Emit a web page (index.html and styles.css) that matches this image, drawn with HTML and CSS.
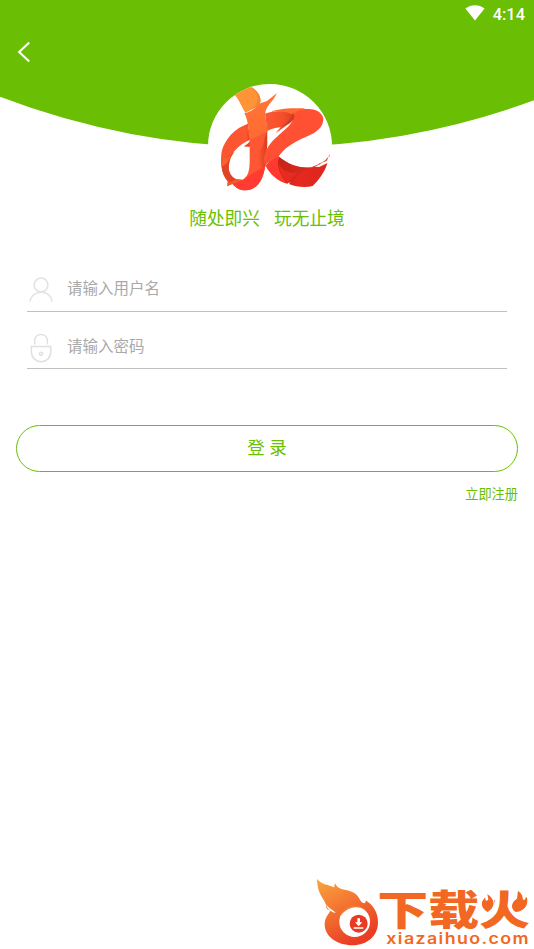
FILE: index.html
```html
<!DOCTYPE html>
<html lang="zh-CN">
<head>
    <meta charset="UTF-8">
    <meta name="viewport" content="width=device-width, initial-scale=1.0">
    <title>登录</title>
    <link rel="stylesheet" href="styles.css">
</head>
<body>
    <div class="login-page">
        <!-- Header -->
        <header class="header">
            <svg class="header-bg" viewBox="0 0 534 148" aria-hidden="true">
                <path fill="#6abe04" d="M0 0H534V100.3A760 760 0 0 1 0 96.8Z"/>
            </svg>
            <div class="status-bar">
                <svg class="wifi" viewBox="0 0 20 16" aria-hidden="true">
                    <path fill="#fff" d="M.4 3.6C6-.9 14-.9 19.6 3.6L10 15.4Z"/>
                </svg>
                <span>4:14</span>
            </div>
            <a class="back-btn" href="#" aria-label="返回">
                <svg viewBox="0 0 14 22" aria-hidden="true">
                    <path fill="none" stroke="#fff" stroke-width="2.1" d="M12.2 1.5 2.2 11l10 9.5"/>
                </svg>
            </a>
        </header>

        <!-- Logo -->
        <div class="logo">
            <svg viewBox="24 24 372 372" aria-hidden="true">
                <defs>
                    <linearGradient id="stem" x1="0" y1="0" x2="0" y2="1">
                        <stop offset="0" stop-color="#ff7636"/>
                        <stop offset="1" stop-color="#ff6a32"/>
                    </linearGradient>
                    <linearGradient id="fold" x1="0" y1="0" x2="1" y2="0">
                        <stop offset="0" stop-color="#ff5733"/>
                        <stop offset=".6" stop-color="#f44e2b"/>
                        <stop offset="1" stop-color="#d93c22"/>
                    </linearGradient>
                    <linearGradient id="tail" x1="0" y1="0" x2="1" y2="0">
                        <stop offset="0" stop-color="#c42117"/>
                        <stop offset=".4" stop-color="#e5291f"/>
                        <stop offset="1" stop-color="#dc261e"/>
                    </linearGradient>
                    <linearGradient id="shade" x1="0" y1="0" x2="1" y2="0">
                        <stop offset="0" stop-color="#c83018" stop-opacity="0"/>
                        <stop offset="1" stop-color="#c83018" stop-opacity=".7"/>
                    </linearGradient>
                </defs>
                <!-- left loop -->
                <path fill="#fc5531" d="M144 143C105 156 76 188 66 223C59 254 65 294 83 317L82 329L97 322C108 329 128 315 128 311C102 315 87 299 86 277C85 238 110 208 151 191Z"/>
                <path fill="#e04427" d="M66 248C61 278 69 304 88 317L82 329L101 321L108 309C91 302 84 282 87 267C90 246 99 229 108 220C97 234 82 245 66 248Z"/>
                <path fill="#fa6030" d="M67 246C83 246 95 239 104 228L79 263C69 270 66 271 65 273Z"/>
                <path fill="#e04a2a" d="M144 143C134 151 139 166 146 177L151 190L144 192L139 157Z"/>
                <path fill="#f45c2d" d="M83 318L82 331L103 322 128 311 108 309C98 318 91 319 83 318Z"/>
                <!-- orange top -->
                <path fill="#ff9338" d="M103 56Q123 37 154 33C171 43 184 65 180 79C176 92 156 100 136 110C126 95 119 72 103 56Z"/>
                <path fill="#f4842f" d="M154 33C180 48 188 73 177 87L137 111C157 99 172 86 173 69C174 54 165 42 154 33Z"/>
                <!-- upper arch -->
                <path fill="url(#fold)" d="M195 113C227 101 275 103 284 115C290 133 254 151 227 173L242 154C224 155 209 161 202 166Z"/>
                <path fill="#ff6a32" d="M216 105C249 95 291 96 315 97L292 108 281 117C264 107 242 105 216 107Z"/>
                <!-- stem -->
                <path fill="#ff5733" d="M151 190L202 163L202 203C202 231 193 241 196 266C191 305 173 342 137 343C119 343 107 335 97 323C139 314 150 298 149 248L149 211L132 211C142 207 147 202 151 190Z"/>
                <path fill="url(#stem)" d="M133 112C156 107 160 99 181 82L201 75L231 51C218 79 196 91 196 113C196 134 202 142 203 166L149 193C146 155 143 130 133 112Z"/>
                <path fill="url(#shade)" d="M200 164C201 189 201 207 201 216L194 241C193 260 197 266 198 270L187 276C171 257 170 228 188 211Z"/>
                <path fill="#ff3b32" d="M97 323C113 319 128 313 137 305L196 269C190 312 172 342 137 343C119 343 108 336 97 323Z"/>
                <path fill="#ee4527" d="M132 211L149 199V213Z"/>
                <!-- right stroke -->
                <path fill="#ff5033" d="M281 115C294 101 306 98 323 99C350 98 370 113 370 130C369 162 335 177 305 188C272 205 252 218 237 240C226 257 200 255 197 270C189 254 192 235 201 219C224 175 285 153 281 115Z"/>
                <path fill="#c93820" d="M278 108C289 120 283 132 269 142L241 155L227 170C236 154 280 133 278 108Z" opacity=".65"/>
                <path fill="#ff3830" d="M197 269C205 256 220 251 237 239C233 261 241 283 264 324C235 318 207 292 197 269Z"/>
                <path fill="url(#tail)" d="M237 242C270 269 306 278 341 273Q365 268 382 262C374 290 355 314 338 330C314 337 286 332 267 324L271 319L261 322C242 302 228 268 237 242Z"/>
                <path fill="#c42818" d="M237 242C267 268 304 278 335 274C306 281 290 305 262 322C242 302 229 274 237 242Z" opacity=".5"/>
                <path fill="#e62b20" d="M237 262C245 283 263 292 292 290L263 321C246 308 235 282 237 262Z"/>
                <path fill="#ee4430" d="M336 272C353 268 359 261 380 256L390 232L388 242L381 246C377 255 365 259 355 263L383 261Q360 279 336 272Z"/>
                <path fill="#fff" d="M345 272L384 253 383 260 357 273Z"/>
            </svg>
        </div>
        <h1 class="slogan"><span>随处即兴</span><span>玩无止境</span></h1>

        <!-- Login Form -->
        <form class="login-form">
            <label class="field">
                <svg class="field-icon user-icon" viewBox="0 0 26 30" aria-hidden="true">
                    <g fill="none" stroke="#e3e3e3" stroke-width="1.5">
                        <circle cx="13" cy="8" r="6.9"/>
                        <path d="M2 24.5C4 12 22 12 24.2 24.5"/>
                    </g>
                </svg>
                <input type="text" placeholder="请输入用户名">
            </label>
            <label class="field">
                <svg class="field-icon" viewBox="0 0 26 30" aria-hidden="true">
                    <g fill="none" stroke="#e0e0e0" stroke-width="1.5">
                        <path d="M6.7 11.5V8C6.7-.6 19.4-.6 19.4 8v3.5M3.4 13.6H22.8V18.5C22.8 32 3.4 32 3.4 18.5Z"/>
                        <circle cx="13.1" cy="20.8" r="1.6"/>
                    </g>
                </svg>
                <input type="password" placeholder="请输入密码">
            </label>
            <button type="button" class="login-btn">登 录</button>
            <a class="register" href="#">立即注册</a>
        </form>

        <!-- Site brand -->
        <footer class="brand">
            <svg viewBox="0 0 672 237" role="img" aria-label="下载火 xiazaihuo.com">
                <defs>
                    <linearGradient id="flame" x1="0" y1="0" x2=".5" y2="1">
                        <stop offset="0" stop-color="#faa63e"/>
                        <stop offset=".45" stop-color="#f47832"/>
                        <stop offset="1" stop-color="#ea3d24"/>
                    </linearGradient>
                </defs>
                <path fill="url(#flame)" d="M21 27C38 49 67 42 86 62C92 70 94 80 91 87C79 76 68 60 75 40C85 62 106 57 127 66C151 78 146 91 158 98C165 102 169 97 167 91C190 105 204 128 204 157C204 198 172 226 128 226C80 226 44 199 44 163C44 142 56 133 61 122C51 119 46 113 48 104C42 84 22 74 21 27Z"/>
                <path fill="#fff" d="M48 103C50 115 61 126 77 129C69 119 57 117 48 103Z"/>
                <circle cx="134" cy="155" r="46" fill="#fff"/>
                <path fill="#f47b32" d="M91 139C101 105 142 95 169 122C143 105 113 109 91 139Z"/>
                <circle cx="146" cy="161" r="27" fill="#e83b26"/>
                <path fill="#fff" d="M142 145h8v12h7l-11 12-11-12h7zM131 172h29v4h-29z"/>
                <g fill="#f26722">
                    <text class="brand-name" transform="translate(202 165) scale(1 .86)" textLength="458" lengthAdjust="spacingAndGlyphs">下载火</text>
                    <!-- the two dots of the last character are flames -->
                    <path fill="#fff" d="M510 60H553V129H510ZM608 60H662V128H608Z"/>
                    <path d="M532 126C511 112 511 96 526 82C525 92 530 96 535 88L532 72C559 89 554 115 532 126ZM617 126C598 114 606 95 621 86L624 62C643 76 635 87 642 91L650 80C658 108 640 124 617 126Z"/>
                    <text class="brand-url" transform="translate(229 221) scale(1.16 1)" textLength="368" lengthAdjust="spacing">xiazaihuo.com</text>
                </g>
            </svg>
        </footer>
    </div>
</body>
</html>
```
FILE: styles.css
```css
/* CSS Reset */
* { margin: 0; padding: 0; box-sizing: border-box; }
body {
    font-family: Roboto, "Noto Sans CJK SC", sans-serif;
    background-color: #ffffff;
}
a {
    color: inherit;
    text-decoration: none;
}
svg {
    display: block;
}
.login-page {
    display: flex;
    flex-direction: column;
    height: 100vh;
    min-height: 949px;
    overflow: hidden;
}

/* Header */
.header {
    position: relative;
    height: 84px;
    color: #ffffff;
}
.header-bg {
    position: absolute;
    top: 0;
    left: 0;
    width: 100%;
    z-index: -1;
}
.status-bar {
    display: flex;
    justify-content: flex-end;
    align-items: center;
    gap: 8px;
    height: 28px;
    padding-right: 9px;
    font-size: 16.4px;
    font-weight: 500;
}
.wifi {
    width: 20px;
    height: 16px;
    margin-top: -2px;
}
.back-btn {
    display: block;
    width: 14px;
    margin: 13px 0 0 17px;
}

/* Logo */
.logo {
    width: 124px;
    height: 124px;
    margin-left: 208px;
    border-radius: 50%;
    background-color: #ffffff;
    overflow: hidden;
}
.slogan {
    display: flex;
    justify-content: center;
    gap: 14px;
    height: 26px;
    margin-top: -2px;
    line-height: 26px;
    font-size: 17.7px;
    font-weight: 400;
    color: #6abe04;
}

/* Form */
.login-form {
    display: flex;
    flex-direction: column;
    padding: 22px 16px 0;
}
.field {
    display: flex;
    align-items: center;
    height: 58px;
    margin: 0 11px;
    border-bottom: 1px solid #c0c0c0;
}
.field + .field {
    height: 57px;
}
.field-icon {
    width: 26px;
    height: 30px;
    margin: 15px 13px 0 1px;
}
.user-icon {
    margin-top: 18px;
}
.field input {
    flex: 1;
    height: 30px;
    margin-top: 13px;
    border: none;
    outline: none;
    background: none;
    font-family: inherit;
    font-size: 15.5px;
}
.field input::placeholder {
    color: #a9a9a9;
}
.login-btn {
    height: 47px;
    margin-top: 56px;
    padding-bottom: 5px;
    border: 1px solid #6abe04;
    border-radius: 24px;
    background-color: #ffffff;
    color: #6abe04;
    font-family: inherit;
    font-size: 17.5px;
}
.register {
    align-self: flex-end;
    margin-top: 13px;
    line-height: 20px;
    font-size: 13.2px;
    color: #6abe04;
}

/* Brand */
.brand {
    width: 224px;
    height: 79px;
    margin: auto 0 0 310px;
}
.brand-name {
    font-family: "Noto Sans CJK SC", sans-serif;
    font-size: 142px;
    font-weight: 900;
}
.brand-url {
    font-family: Inter, sans-serif;
    font-size: 46px;
    font-weight: 600;
}
```
